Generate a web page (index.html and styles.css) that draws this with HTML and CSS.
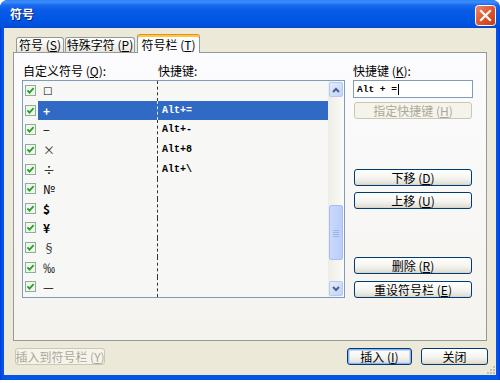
FILE: index.html
```html
<!DOCTYPE html>
<html>
<head>
<meta charset="utf-8">
<link rel="stylesheet" href="styles.css">
</head>
<body>
<div class="window">
  <div class="titlebar">
    <span class="title">符号</span>
    <span class="close">
      <svg width="21" height="21" viewBox="0 0 21 21">
        <defs>
          <linearGradient id="cg" x1="0" y1="0" x2="1" y2="1">
            <stop offset="0" stop-color="#F08A6A"/>
            <stop offset="0.5" stop-color="#E0552F"/>
            <stop offset="1" stop-color="#C23A14"/>
          </linearGradient>
        </defs>
        <rect x="0.5" y="0.5" width="20" height="20" rx="3" fill="url(#cg)" stroke="#FFFFFF"/>
        <path d="M6 6 L15 15 M15 6 L6 15" stroke="#FFFFFF" stroke-width="2.2" stroke-linecap="square"/>
      </svg>
    </span>
  </div>
  <div class="client">
    <div class="tabs">
      <div class="tab t1">符号 (<u>S</u>)</div>
      <div class="tab t2">特殊字符 (<u>P</u>)</div>
      <div class="tab t3 active">符号栏 (<u>T</u>)</div>
    </div>
    <div class="panel">
      <div class="leftcol">
        <div class="heads">
          <span class="h1">自定义符号 (<u>Q</u>):</span>
          <span class="h2">快捷键:</span>
        </div>
        <div class="list">
          <div class="rows">
            <div class="row"><span class="cb"><svg class="chk" width="11" height="11" viewBox="0 0 11 11"><rect x="0.5" y="0.5" width="10" height="10" fill="#F1F5EE" stroke="#8FAE9A"/><path d="M2.4 5.4 L4.5 7.6 L8.6 3.2" fill="none" stroke="#22A422" stroke-width="1.8"/></svg></span><span class="sym sq">□</span><span class="key"></span></div>
            <div class="row sel"><span class="cb"><svg class="chk" width="11" height="11" viewBox="0 0 11 11"><rect x="0.5" y="0.5" width="10" height="10" fill="#F1F5EE" stroke="#8FAE9A"/><path d="M2.4 5.4 L4.5 7.6 L8.6 3.2" fill="none" stroke="#22A422" stroke-width="1.8"/></svg></span><span class="sym bold">+</span><span class="key">Alt+=</span></div>
            <div class="row"><span class="cb"><svg class="chk" width="11" height="11" viewBox="0 0 11 11"><rect x="0.5" y="0.5" width="10" height="10" fill="#F1F5EE" stroke="#8FAE9A"/><path d="M2.4 5.4 L4.5 7.6 L8.6 3.2" fill="none" stroke="#22A422" stroke-width="1.8"/></svg></span><span class="sym">−</span><span class="key">Alt+-</span></div>
            <div class="row"><span class="cb"><svg class="chk" width="11" height="11" viewBox="0 0 11 11"><rect x="0.5" y="0.5" width="10" height="10" fill="#F1F5EE" stroke="#8FAE9A"/><path d="M2.4 5.4 L4.5 7.6 L8.6 3.2" fill="none" stroke="#22A422" stroke-width="1.8"/></svg></span><span class="sym thin">×</span><span class="key">Alt+8</span></div>
            <div class="row"><span class="cb"><svg class="chk" width="11" height="11" viewBox="0 0 11 11"><rect x="0.5" y="0.5" width="10" height="10" fill="#F1F5EE" stroke="#8FAE9A"/><path d="M2.4 5.4 L4.5 7.6 L8.6 3.2" fill="none" stroke="#22A422" stroke-width="1.8"/></svg></span><span class="sym">÷</span><span class="key">Alt+\</span></div>
            <div class="row"><span class="cb"><svg class="chk" width="11" height="11" viewBox="0 0 11 11"><rect x="0.5" y="0.5" width="10" height="10" fill="#F1F5EE" stroke="#8FAE9A"/><path d="M2.4 5.4 L4.5 7.6 L8.6 3.2" fill="none" stroke="#22A422" stroke-width="1.8"/></svg></span><span class="sym">№</span><span class="key"></span></div>
            <div class="row"><span class="cb"><svg class="chk" width="11" height="11" viewBox="0 0 11 11"><rect x="0.5" y="0.5" width="10" height="10" fill="#F1F5EE" stroke="#8FAE9A"/><path d="M2.4 5.4 L4.5 7.6 L8.6 3.2" fill="none" stroke="#22A422" stroke-width="1.8"/></svg></span><span class="sym bold">$</span><span class="key"></span></div>
            <div class="row"><span class="cb"><svg class="chk" width="11" height="11" viewBox="0 0 11 11"><rect x="0.5" y="0.5" width="10" height="10" fill="#F1F5EE" stroke="#8FAE9A"/><path d="M2.4 5.4 L4.5 7.6 L8.6 3.2" fill="none" stroke="#22A422" stroke-width="1.8"/></svg></span><span class="sym bold">¥</span><span class="key"></span></div>
            <div class="row"><span class="cb"><svg class="chk" width="11" height="11" viewBox="0 0 11 11"><rect x="0.5" y="0.5" width="10" height="10" fill="#F1F5EE" stroke="#8FAE9A"/><path d="M2.4 5.4 L4.5 7.6 L8.6 3.2" fill="none" stroke="#22A422" stroke-width="1.8"/></svg></span><span class="sym thin">§</span><span class="key"></span></div>
            <div class="row"><span class="cb"><svg class="chk" width="11" height="11" viewBox="0 0 11 11"><rect x="0.5" y="0.5" width="10" height="10" fill="#F1F5EE" stroke="#8FAE9A"/><path d="M2.4 5.4 L4.5 7.6 L8.6 3.2" fill="none" stroke="#22A422" stroke-width="1.8"/></svg></span><span class="sym">‰</span><span class="key"></span></div>
            <div class="row"><span class="cb"><svg class="chk" width="11" height="11" viewBox="0 0 11 11"><rect x="0.5" y="0.5" width="10" height="10" fill="#F1F5EE" stroke="#8FAE9A"/><path d="M2.4 5.4 L4.5 7.6 L8.6 3.2" fill="none" stroke="#22A422" stroke-width="1.8"/></svg></span><span class="sym">—</span><span class="key"></span></div>
          </div>
          <div class="sb">
            <div class="sbtn"><svg width="8" height="6" viewBox="0 0 8 6"><path d="M1 5 L4 2 L7 5" fill="none" stroke="#4D6185" stroke-width="2"/></svg></div>
            <div class="track">
              <div class="thumb"><svg width="6" height="8" viewBox="0 0 6 8"><path d="M0 1.5 H6 M0 3.5 H6 M0 5.5 H6 M0 7.5 H6" stroke="#9EB3E6" stroke-width="1"/></svg></div>
            </div>
            <div class="sbtn"><svg width="8" height="6" viewBox="0 0 8 6"><path d="M1 1 L4 4 L7 1" fill="none" stroke="#4D6185" stroke-width="2"/></svg></div>
          </div>
        </div>
      </div>
      <div class="rightcol">
        <div class="label">快捷键 (<u>K</u>):</div>
        <div class="input">Alt + =<span class="caret"></span></div>
        <div class="btn disabled b-assign">指定快捷键 (<u>H</u>)</div>
        <div class="btn b-down">下移 (<u>D</u>)</div>
        <div class="btn b-up">上移 (<u>U</u>)</div>
        <div class="btn b-del">删除 (<u>R</u>)</div>
        <div class="btn b-reset">重设符号栏 (<u>E</u>)</div>
      </div>
    </div>
    <div class="footer">
      <div class="btn disabled b-insbar">插入到符号栏 (<u>Y</u>)</div>
      <div class="spacer"></div>
      <div class="btn default b-insert">插入 (<u>I</u>)</div>
      <div class="btn b-close">关闭</div>
    </div>
    <svg class="grip" width="10" height="10" viewBox="0 0 10 10">
      <rect x="7" y="1" width="2" height="2" fill="#C3C0B0"/>
      <rect x="4" y="4" width="2" height="2" fill="#C3C0B0"/>
      <rect x="7" y="4" width="2" height="2" fill="#C3C0B0"/>
      <rect x="1" y="7" width="2" height="2" fill="#C3C0B0"/>
      <rect x="4" y="7" width="2" height="2" fill="#C3C0B0"/>
      <rect x="7" y="7" width="2" height="2" fill="#C3C0B0"/>
    </svg>
  </div>
</div>
</body>
</html>
```
FILE: styles.css
```css
* { box-sizing: border-box; }

html, body {
  margin: 0;
  padding: 0;
  background: #FFFFFF;
}

body {
  font-family: "Noto Sans CJK SC", "Noto Sans", sans-serif;
  font-size: 12px;
  color: #000;
}

u { text-decoration: underline; text-underline-offset: 1px; text-decoration-thickness: 1px; }

.window {
  width: 500px;
  height: 380px;
  display: flex;
  flex-direction: column;
  background: linear-gradient(to right, #0831D9 0, #0055E5 2px, #0055E5 calc(100% - 2px), #0831D9 100%);
  border-radius: 8px 8px 0 0;
}

.titlebar {
  height: 28px;
  flex: none;
  display: flex;
  align-items: center;
  justify-content: space-between;
  padding: 0 4px 0 10px;
  border-radius: 8px 8px 0 0;
  background: linear-gradient(#2F80F4 0, #3C8EFB 2px, #1A6BF0 5px, #0A5CE8 10px, #0057E6 18px, #0052DE 25px, #0048CF 28px);
  color: #FFFFFF;
}

.title {
  font-weight: bold;
  font-size: 12px;
  line-height: 14px;
  text-shadow: 1px 1px 0 #0A1E7A;
}

.close {
  display: flex;
  width: 21px;
  height: 21px;
  margin-top: 2px;
}

.client {
  flex: 1;
  position: relative;
  margin: 0 4px 5px 4px;
  background: #ECE9D8;
  display: flex;
  flex-direction: column;
  padding: 6px 9px 0 9px;
}

.tabs {
  height: 18px;
  display: flex;
  align-items: flex-end;
  padding-left: 3px;
  gap: 1px;
}

.tab {
  height: 15px;
  border: 1px solid #919B9C;
  border-bottom: none;
  border-radius: 3px 3px 0 0;
  background: linear-gradient(#FFFFFF, #F3F2EC 60%, #E6E4DA);
  display: flex;
  align-items: center;
  justify-content: center;
  font-size: 12px;
  line-height: 12px;
  white-space: nowrap;
}

.t1 { width: 48px; }
.t2 { width: 70px; }
.t3 { width: 63px; margin-left: 1px; }

.tab.active {
  height: 19px;
  margin-bottom: -1px;
  position: relative;
  z-index: 1;
  background: #FCFCFE;
  border-top: 1px solid #E68B2C;
  box-shadow: inset 0 2px 0 #FFC83C;
  padding-top: 1px;
}

.panel {
  height: 289px;
  flex: none;
  border: 1px solid #919B9C;
  background: linear-gradient(#FCFCFE, #F4F3EE);
  display: flex;
  gap: 8px;
  padding: 11px 13px 0 8px;
}

.leftcol {
  width: 323px;
  flex: none;
}

.heads {
  height: 14px;
  line-height: 14px;
  display: flex;
  margin-bottom: 2px;
}

.h1 { width: 136px; padding-left: 1px; }

.list {
  height: 218px;
  border: 1px solid #7F9DB9;
  background: #F7F7F5;
  display: flex;
}

.rows { flex: 1; }

.row {
  height: 19.6px;
  display: grid;
  grid-template-columns: 15px 119px 1fr;
}

.cb {
  display: flex;
  align-items: center;
  padding-left: 2px;
}

.sym {
  display: flex;
  align-items: center;
  padding-left: 5px;
  font-size: 12px;
}

.sym.sq {
  font-family: "DejaVu Sans", sans-serif;
  font-weight: bold;
  font-size: 10px;
}

.sym.bold { font-weight: bold; }
.sym.thin { color: #333; }

.key {
  display: flex;
  align-items: center;
  padding-left: 4px;
  border-left: 1px dashed #333;
  font-family: "Liberation Mono", monospace;
  font-size: 10px;
  font-weight: bold;
}

.row.sel .sym,
.row.sel .key {
  background: #316AC5;
  color: #FFFFFF;
}

.row.sel .key { border-left-color: #F2E7A8; }

.sb {
  width: 16px;
  flex: none;
  padding: 1px;
  display: flex;
  flex-direction: column;
  background: linear-gradient(to right, #EEEDE5, #FBFBF8);
}

.sbtn {
  height: 15px;
  flex: none;
  border: 1px solid #B6C9F4;
  border-radius: 2px;
  background: linear-gradient(135deg, #E4ECFD, #C1D3FB);
  display: flex;
  align-items: center;
  justify-content: center;
}

.track { flex: 1; }

.thumb {
  margin-top: 108px;
  height: 55px;
  border: 1px solid #A8BEF0;
  border-radius: 2px;
  background: linear-gradient(to right, #CAD9FC, #BACEF9);
  display: flex;
  align-items: center;
  justify-content: center;
}

.rightcol {
  width: 120px;
  flex: none;
  display: flex;
  flex-direction: column;
}

.label {
  height: 14px;
  line-height: 14px;
  margin-bottom: 2px;
}

.input {
  height: 18px;
  border: 1px solid #7F9DB9;
  background: #FFFFFF;
  display: flex;
  align-items: center;
  padding-left: 3px;
  font-family: "Liberation Mono", monospace;
  font-size: 9.5px;
  font-weight: bold;
  white-space: pre;
}

.caret {
  width: 1px;
  height: 11px;
  background: #000;
  margin-left: 1px;
}

.btn {
  height: 17px;
  border: 1px solid #003C74;
  border-radius: 3px;
  background: linear-gradient(#FFFFFF, #F4F4F0 55%, #E3E0D6 90%, #D6D0C5);
  display: flex;
  align-items: center;
  justify-content: center;
  font-size: 12px;
  line-height: 12px;
  white-space: nowrap;
}

.btn.disabled {
  border-color: #C9C7BA;
  background: #F5F4EA;
  color: #ACA899;
}

.rightcol .btn { margin: 0 1px; }

.b-assign { margin-top: 4px !important; }
.b-down { margin-top: 50px !important; }
.b-up { margin-top: 6px !important; }
.b-del { margin-top: 48px !important; }
.b-reset { margin-top: 7px !important; }

.footer {
  display: flex;
  align-items: center;
  margin-top: 7px;
  padding-left: 2px;
  margin-right: -1px;
  gap: 9px;
}

.spacer { flex: 1; }

.b-insbar { width: 90px; }
.b-insert { width: 65px; }
.b-close { width: 67px; }

.btn.default {
  box-shadow: inset 0 0 0 1px #8FB2EC, inset 0 0 0 2px #C4D8F7;
}

.grip {
  position: absolute;
  right: 0;
  bottom: 0;
}
```
